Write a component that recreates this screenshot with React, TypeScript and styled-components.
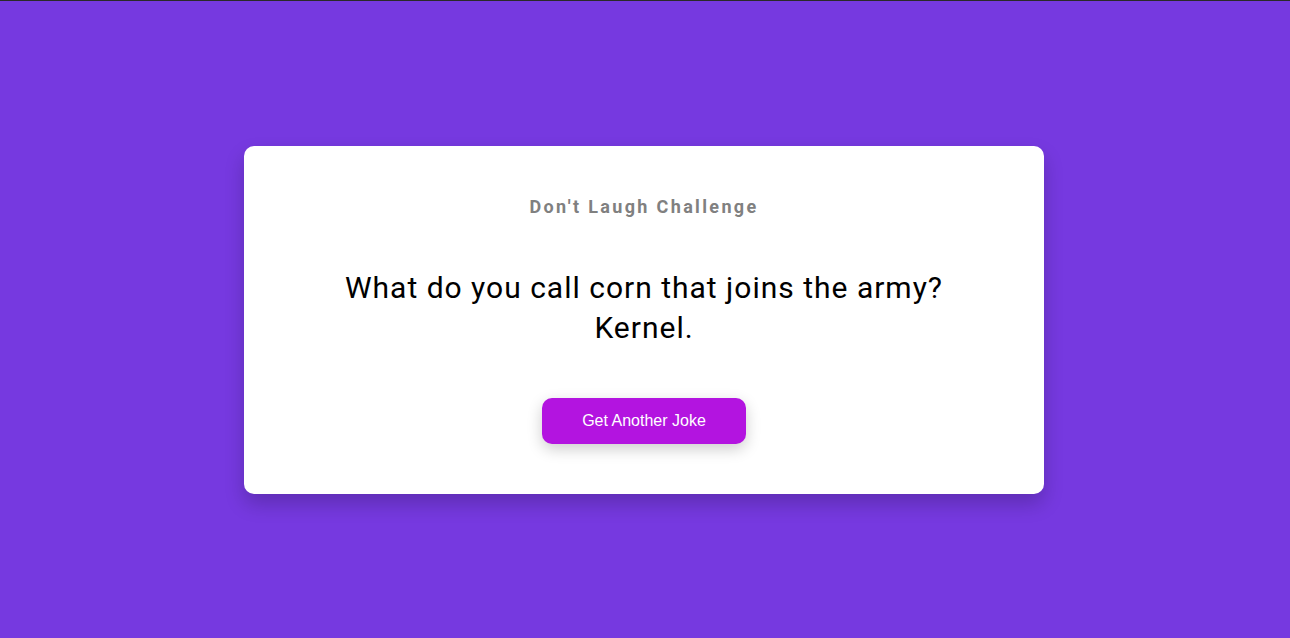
import React from "react";
import styled, { createGlobalStyle } from "styled-components";

const Global = createGlobalStyle`
  html, body { margin: 0; padding: 0; height: 100%; }
  body {
    background: #7639e0;
    border-top: 1px solid #2a2a2a;
    box-sizing: border-box;
    font-family: Roboto, "Liberation Sans", sans-serif;
  }
  #root { height: 100%; }
`;

const Page = styled.main`
  height: 100%;
  box-sizing: border-box;
  padding-right: 2px;
  display: flex;
  align-items: center;
  justify-content: center;
`;

const Card = styled.section`
  width: 800px;
  box-sizing: border-box;
  background: #fff;
  border-radius: 10px;
  padding: 49px 40px 50px;
  box-shadow: 0 10px 20px rgba(0, 0, 0, 0.2);
  display: flex;
  flex-direction: column;
  align-items: center;
  text-align: center;
`;

const Title = styled.h3`
  margin: 0;
  font-size: 18px;
  line-height: 24px;
  font-weight: 700;
  letter-spacing: 2.35px;
  color: #808080;
`;

const Joke = styled.p`
  margin: 49px 0 50px;
  font-size: 30px;
  line-height: 40px;
  letter-spacing: 1px;
  color: #000;
  max-width: 660px;
`;

const Button = styled.button`
  width: 204px;
  height: 46px;
  border: none;
  border-radius: 10px;
  background: #b314e0;
  color: #fff;
  font-family: Arial, "Liberation Sans", sans-serif;
  font-size: 16px;
  cursor: pointer;
  box-shadow: 0 5px 15px rgba(0, 0, 0, 0.2);
`;

export default function App() {
  return (
    <>
      <Global />
      <Page>
        <Card>
          <Title>Don't Laugh Challenge</Title>
          <Joke>
            What do you call corn that joins the army?
            <br />
            Kernel.
          </Joke>
          <Button>Get Another Joke</Button>
        </Card>
      </Page>
    </>
  );
}
